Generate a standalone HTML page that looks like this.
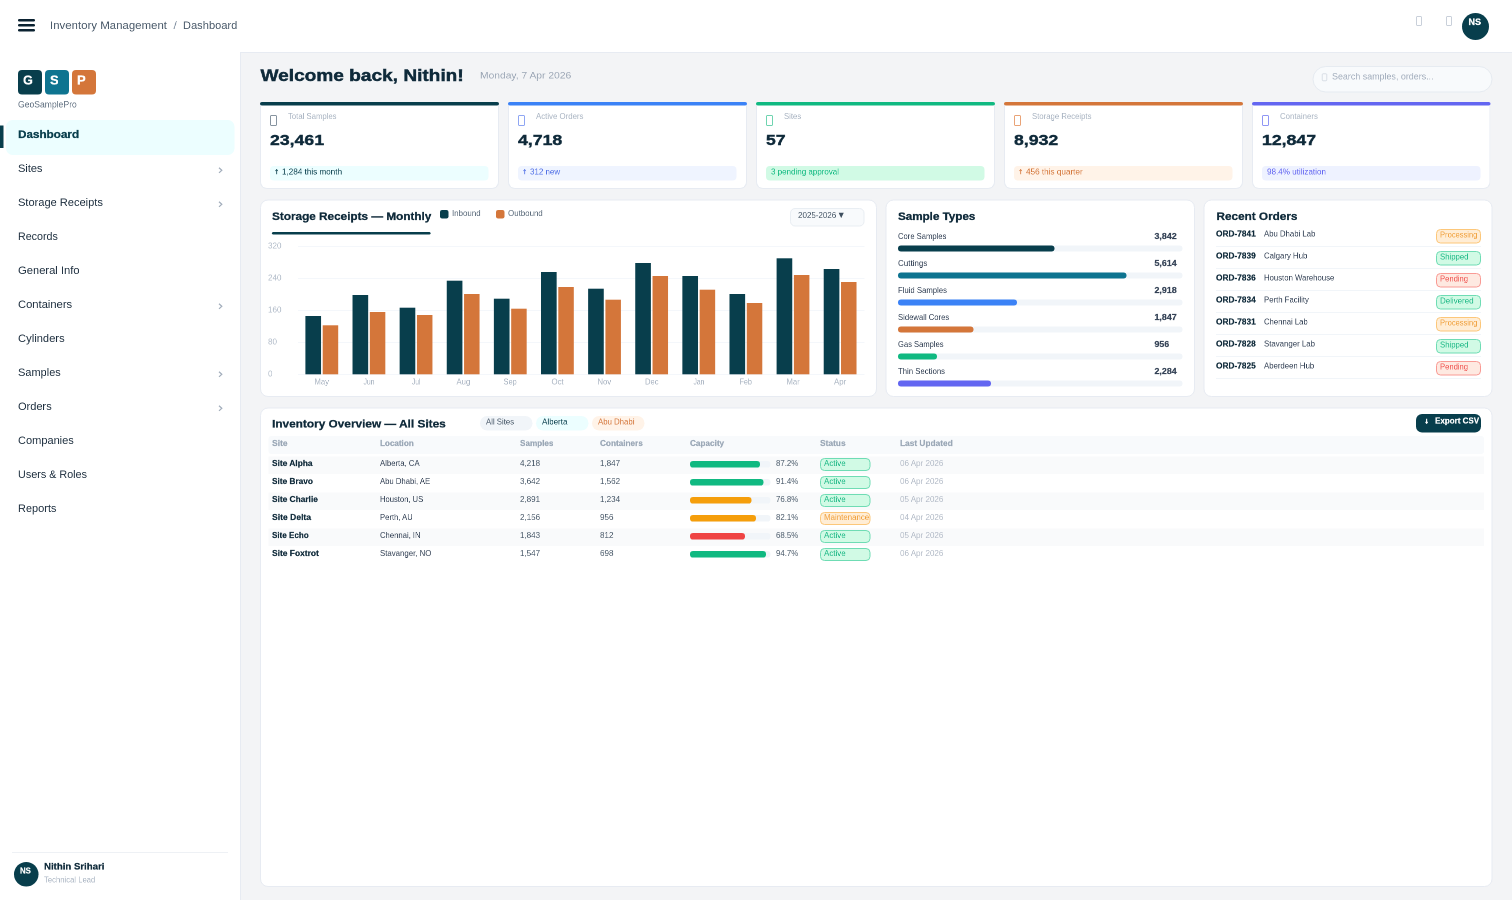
<!DOCTYPE html>
<html lang="en"><head><meta charset="utf-8"><title>GeoSamplePro — Dashboard</title><style>
html,body{margin:0;padding:0;}
body{width:1512px;height:900px;position:relative;overflow:hidden;background:#ffffff;font-family:"Liberation Sans",sans-serif;}
#app{position:absolute;left:0;top:0;width:3024px;height:1800px;transform:scale(0.5);transform-origin:0 0;}
.b{position:absolute;box-sizing:border-box;}
.t{position:absolute;white-space:pre;line-height:1;transform-origin:0 0;will-change:transform;font-family:"Liberation Sans",sans-serif;}
</style></head>
<body>
<div id="app">
<div class="b" style="left:480px;top:104px;width:2544px;height:1696px;background:#f3f4f6;border-left:2px solid #e7ebf2;border-top:2px solid #e7ebf2;"></div>
<div class="b" style="left:36px;top:38px;width:33.5px;height:5px;background:#0b2231;border-radius:2.5px;"></div>
<div class="b" style="left:36px;top:48px;width:33.5px;height:5px;background:#0b2231;border-radius:2.5px;"></div>
<div class="b" style="left:36px;top:58.2px;width:33.5px;height:5px;background:#0b2231;border-radius:2.5px;"></div>
<span class="t" style="left:100.00px;top:41.00px;font-size:21.40px;color:#4b5b6b;transform:scaleX(1.069);">Inventory Management</span>
<span class="t" style="left:346.60px;top:41.00px;font-size:21.40px;color:#8593a3;transform:scaleX(1.131);">/</span>
<span class="t" style="left:366.00px;top:41.00px;font-size:21.40px;color:#4b5b6b;transform:scaleX(1.038);">Dashboard</span>
<div class="b" style="left:2832px;top:32px;width:12px;height:20px;border-radius:2px;border:2px solid #c9d0da;"></div>
<div class="b" style="left:2892px;top:32px;width:12px;height:20px;border-radius:2px;border:2px solid #c9d0da;"></div>
<div class="b" style="left:2924px;top:26px;width:54px;height:54px;background:#083e4c;border-radius:50%;"></div>
<span class="t" style="left:2936.60px;top:36.00px;font-size:17.60px;color:#ffffff;transform:scaleX(1.019);font-weight:700;-webkit-text-stroke:0.45px #ffffff;">NS</span>
<div class="b" style="left:36px;top:140px;width:48.4px;height:48.6px;background:#083e4c;border-radius:8px;"></div>
<div class="b" style="left:90px;top:140px;width:48.4px;height:48.6px;background:#0e7490;border-radius:8px;"></div>
<div class="b" style="left:144px;top:140px;width:48.4px;height:48.6px;background:#d4763a;border-radius:8px;"></div>
<span class="t" style="left:45.60px;top:147.80px;font-size:25.20px;color:#ffffff;transform:scaleX(1.006);font-weight:700;-webkit-text-stroke:0.50px #ffffff;">G</span>
<span class="t" style="left:100.40px;top:147.80px;font-size:25.20px;color:#ffffff;transform:scaleX(1.030);font-weight:700;-webkit-text-stroke:0.50px #ffffff;">S</span>
<span class="t" style="left:154.00px;top:147.80px;font-size:25.20px;color:#ffffff;transform:scaleX(1.046);font-weight:700;-webkit-text-stroke:0.50px #ffffff;">P</span>
<span class="t" style="left:36.00px;top:201.20px;font-size:17.60px;color:#637282;transform:scaleX(0.976);">GeoSamplePro</span>
<div class="b" style="left:12px;top:240px;width:457px;height:70px;background:#ecfeff;border-radius:13px;"></div>
<div class="b" style="left:0px;top:251px;width:7px;height:45px;background:#083e4c;"></div>
<span class="t" style="left:36.00px;top:259.00px;font-size:21.40px;color:#083e4c;transform:scaleX(1.093);font-weight:700;-webkit-text-stroke:0.56px #083e4c;">Dashboard</span>
<span class="t" style="left:36.00px;top:327.00px;font-size:21.40px;color:#1e2f3f;transform:scaleX(1.028);">Sites</span>
<svg class="b" style="left:436px;top:334.2px" width="12" height="14" viewBox="0 0 6 7"><path d="M1 0.7 L3.8 3.3 L1 5.9" fill="none" stroke="#a3aebc" stroke-width="1.25"/></svg>
<span class="t" style="left:36.00px;top:395.00px;font-size:21.40px;color:#1e2f3f;transform:scaleX(1.035);">Storage Receipts</span>
<svg class="b" style="left:436px;top:402.2px" width="12" height="14" viewBox="0 0 6 7"><path d="M1 0.7 L3.8 3.3 L1 5.9" fill="none" stroke="#a3aebc" stroke-width="1.25"/></svg>
<span class="t" style="left:36.00px;top:463.00px;font-size:21.40px;color:#1e2f3f;">Records</span>
<span class="t" style="left:36.00px;top:531.00px;font-size:21.40px;color:#1e2f3f;transform:scaleX(1.046);">General Info</span>
<span class="t" style="left:36.00px;top:599.00px;font-size:21.40px;color:#1e2f3f;transform:scaleX(1.046);">Containers</span>
<svg class="b" style="left:436px;top:606.2px" width="12" height="14" viewBox="0 0 6 7"><path d="M1 0.7 L3.8 3.3 L1 5.9" fill="none" stroke="#a3aebc" stroke-width="1.25"/></svg>
<span class="t" style="left:36.00px;top:667.00px;font-size:21.40px;color:#1e2f3f;transform:scaleX(1.047);">Cylinders</span>
<span class="t" style="left:36.00px;top:735.00px;font-size:21.40px;color:#1e2f3f;transform:scaleX(1.027);">Samples</span>
<svg class="b" style="left:436px;top:742.2px" width="12" height="14" viewBox="0 0 6 7"><path d="M1 0.7 L3.8 3.3 L1 5.9" fill="none" stroke="#a3aebc" stroke-width="1.25"/></svg>
<span class="t" style="left:36.00px;top:803.00px;font-size:21.40px;color:#1e2f3f;transform:scaleX(1.030);">Orders</span>
<svg class="b" style="left:436px;top:810.2px" width="12" height="14" viewBox="0 0 6 7"><path d="M1 0.7 L3.8 3.3 L1 5.9" fill="none" stroke="#a3aebc" stroke-width="1.25"/></svg>
<span class="t" style="left:36.00px;top:871.00px;font-size:21.40px;color:#1e2f3f;transform:scaleX(1.032);">Companies</span>
<span class="t" style="left:36.00px;top:939.00px;font-size:21.40px;color:#1e2f3f;transform:scaleX(1.009);">Users &amp; Roles</span>
<span class="t" style="left:36.00px;top:1007.00px;font-size:21.40px;color:#1e2f3f;transform:scaleX(1.025);">Reports</span>
<div class="b" style="left:24px;top:1704px;width:432px;height:2px;background:#eef1f5;"></div>
<div class="b" style="left:28px;top:1724px;width:49px;height:49px;background:#083e4c;border-radius:50%;"></div>
<span class="t" style="left:40.00px;top:1734.20px;font-size:15.68px;color:#ffffff;font-weight:700;-webkit-text-stroke:0.39px #ffffff;">NS</span>
<span class="t" style="left:88.00px;top:1725.40px;font-size:17.60px;color:#0f2a3a;transform:scaleX(1.094);font-weight:700;-webkit-text-stroke:0.45px #0f2a3a;">Nithin Srihari</span>
<span class="t" style="left:88.00px;top:1751.80px;font-size:15.68px;color:#a9b4c2;transform:scaleX(0.980);">Technical Lead</span>
<span class="t" style="left:520.60px;top:135.00px;font-size:32.96px;color:#0f2a3a;transform:scaleX(1.158);font-weight:700;-webkit-text-stroke:0.90px #0f2a3a;">Welcome back, Nithin!</span>
<span class="t" style="left:960.00px;top:141.20px;font-size:19.26px;color:#9ba6b5;transform:scaleX(1.067);">Monday, 7 Apr 2026</span>
<div class="b" style="left:2625px;top:132px;width:360px;height:53px;background:#f8fafc;border-radius:26.5px;border:2px solid #e6ebf1;"></div>
<div class="b" style="left:2644px;top:147.4px;width:10.4px;height:14.8px;border-radius:2px;border:1.8px solid #bcc5d0;"></div>
<span class="t" style="left:2664.00px;top:145.40px;font-size:17.60px;color:#a3aebd;transform:scaleX(1.013);">Search samples, orders...</span>
<div class="b" style="left:520px;top:208px;width:478px;height:170px;background:#ffffff;border:2px solid #e7ebf2;border-top:none;border-radius:0 0 14px 14px;"></div>
<div class="b" style="left:520px;top:204px;width:478px;height:7px;background:#083e4c;border-radius:4px;"></div>
<div class="b" style="left:540px;top:229.5px;width:14px;height:22px;border-radius:2px;border:2.5px solid #8794a0;"></div>
<span class="t" style="left:576.00px;top:224.80px;font-size:15.68px;color:#a9b4c2;transform:scaleX(0.986);">Total Samples</span>
<span class="t" style="left:540.00px;top:266.00px;font-size:28.84px;color:#0f2a3a;transform:scaleX(1.226);font-weight:700;-webkit-text-stroke:0.78px #0f2a3a;">23,461</span>
<div class="b" style="left:540.4px;top:332px;width:436.4px;height:29.2px;background:#ecfeff;border-radius:8px;"></div>
<svg class="b" style="left:550.42px;top:338.48px" width="6.44" height="10.92" viewBox="0 0 3.22 5.46"><path d="M1.61 5.46 V0.48 M0.40 2.10 L1.61 0.48 L2.82 2.10" fill="none" stroke="#083e4c" stroke-width="0.81"/></svg>
<span class="t" style="left:564.00px;top:336.40px;font-size:15.68px;color:#083e4c;transform:scaleX(1.036);">1,284 this month</span>
<div class="b" style="left:1016px;top:208px;width:478px;height:170px;background:#ffffff;border:2px solid #e7ebf2;border-top:none;border-radius:0 0 14px 14px;"></div>
<div class="b" style="left:1016px;top:204px;width:478px;height:7px;background:#3b82f6;border-radius:4px;"></div>
<div class="b" style="left:1036px;top:229.5px;width:14px;height:22px;border-radius:2px;border:2.5px solid #8fa6f3;"></div>
<span class="t" style="left:1072.00px;top:224.80px;font-size:15.68px;color:#a9b4c2;">Active Orders</span>
<span class="t" style="left:1036.00px;top:266.00px;font-size:28.84px;color:#0f2a3a;transform:scaleX(1.228);font-weight:700;-webkit-text-stroke:0.78px #0f2a3a;">4,718</span>
<div class="b" style="left:1036.4px;top:332px;width:436.4px;height:29.2px;background:#eff4ff;border-radius:8px;"></div>
<svg class="b" style="left:1046.42px;top:338.48px" width="6.44" height="10.92" viewBox="0 0 3.22 5.46"><path d="M1.61 5.46 V0.48 M0.40 2.10 L1.61 0.48 L2.82 2.10" fill="none" stroke="#4f6fe6" stroke-width="0.81"/></svg>
<span class="t" style="left:1060.00px;top:336.40px;font-size:15.68px;color:#4f6fe6;transform:scaleX(1.015);">312 new</span>
<div class="b" style="left:1512px;top:208px;width:478px;height:170px;background:#ffffff;border:2px solid #e7ebf2;border-top:none;border-radius:0 0 14px 14px;"></div>
<div class="b" style="left:1512px;top:204px;width:478px;height:7px;background:#10b981;border-radius:4px;"></div>
<div class="b" style="left:1532px;top:229.5px;width:14px;height:22px;border-radius:2px;border:2.5px solid #6fd4b0;"></div>
<span class="t" style="left:1568.00px;top:224.80px;font-size:15.68px;color:#a9b4c2;transform:scaleX(0.982);">Sites</span>
<span class="t" style="left:1532.00px;top:266.00px;font-size:28.84px;color:#0f2a3a;transform:scaleX(1.215);font-weight:700;-webkit-text-stroke:0.78px #0f2a3a;">57</span>
<div class="b" style="left:1532.4px;top:332px;width:436.4px;height:29.2px;background:#d1fae5;border-radius:8px;"></div>
<span class="t" style="left:1542.00px;top:336.40px;font-size:15.68px;color:#10b981;transform:scaleX(1.020);">3 pending approval</span>
<div class="b" style="left:2008px;top:208px;width:478px;height:170px;background:#ffffff;border:2px solid #e7ebf2;border-top:none;border-radius:0 0 14px 14px;"></div>
<div class="b" style="left:2008px;top:204px;width:478px;height:7px;background:#d4763a;border-radius:4px;"></div>
<div class="b" style="left:2028px;top:229.5px;width:14px;height:22px;border-radius:2px;border:2.5px solid #e9a377;"></div>
<span class="t" style="left:2064.00px;top:224.80px;font-size:15.68px;color:#a9b4c2;transform:scaleX(0.989);">Storage Receipts</span>
<span class="t" style="left:2028.00px;top:266.00px;font-size:28.84px;color:#0f2a3a;transform:scaleX(1.228);font-weight:700;-webkit-text-stroke:0.78px #0f2a3a;">8,932</span>
<div class="b" style="left:2028.4px;top:332px;width:436.4px;height:29.2px;background:#fff3e8;border-radius:8px;"></div>
<svg class="b" style="left:2038.42px;top:338.48px" width="6.44" height="10.92" viewBox="0 0 3.22 5.46"><path d="M1.61 5.46 V0.48 M0.40 2.10 L1.61 0.48 L2.82 2.10" fill="none" stroke="#d4763a" stroke-width="0.81"/></svg>
<span class="t" style="left:2052.00px;top:336.40px;font-size:15.68px;color:#d4763a;transform:scaleX(1.040);">456 this quarter</span>
<div class="b" style="left:2504px;top:208px;width:477px;height:170px;background:#ffffff;border:2px solid #e7ebf2;border-top:none;border-radius:0 0 14px 14px;"></div>
<div class="b" style="left:2504px;top:204px;width:477px;height:7px;background:#6366f1;border-radius:4px;"></div>
<div class="b" style="left:2524px;top:229.5px;width:14px;height:22px;border-radius:2px;border:2.5px solid #8f96f5;"></div>
<span class="t" style="left:2560.00px;top:224.80px;font-size:15.68px;color:#a9b4c2;">Containers</span>
<span class="t" style="left:2524.00px;top:266.00px;font-size:28.84px;color:#0f2a3a;transform:scaleX(1.226);font-weight:700;-webkit-text-stroke:0.78px #0f2a3a;">12,847</span>
<div class="b" style="left:2524.4px;top:332px;width:436.4px;height:29.2px;background:#eef2ff;border-radius:8px;"></div>
<span class="t" style="left:2534.00px;top:336.40px;font-size:15.68px;color:#6366f1;transform:scaleX(1.032);">98.4% utilization</span>
<div class="b" style="left:520px;top:399px;width:1234px;height:395px;background:#ffffff;border-radius:16px;border:2px solid #e7ebf2;"></div>
<span class="t" style="left:544.40px;top:423.00px;font-size:21.40px;color:#0f2a3a;transform:scaleX(1.099);font-weight:700;-webkit-text-stroke:0.56px #0f2a3a;">Storage Receipts — Monthly</span>
<div class="b" style="left:544px;top:464.4px;width:316.6px;height:4.8px;background:#083e4c;border-radius:2.4px;"></div>
<div class="b" style="left:880px;top:420px;width:16.8px;height:16.8px;background:#083e4c;border-radius:4px;"></div>
<span class="t" style="left:904.00px;top:419.00px;font-size:15.68px;color:#5b6b7b;transform:scaleX(1.009);">Inbound</span>
<div class="b" style="left:992px;top:420px;width:16.8px;height:16.8px;background:#d4763a;border-radius:4px;"></div>
<span class="t" style="left:1016.00px;top:419.00px;font-size:15.68px;color:#5b6b7b;transform:scaleX(1.010);">Outbound</span>
<div class="b" style="left:1580px;top:416px;width:149.4px;height:36.6px;background:#f8fafc;border-radius:10px;border:2px solid #e9eef3;"></div>
<span class="t" style="left:1596.00px;top:423.00px;font-size:15.68px;color:#4b5b6b;transform:scaleX(1.019);">2025-2026</span>
<svg class="b" style="left:1677.4px;top:424.8px" width="10.8" height="11.2" viewBox="0 0 5.4 5.6"><path d="M0 0 H5.4 L2.7 5.6 Z" fill="#3f4f5f"/></svg>
<div class="b" style="left:596px;top:492px;width:1133.4px;height:2px;background:#f4f7fb;"></div>
<span class="t" style="left:536.00px;top:484.20px;font-size:15.68px;color:#b3bdca;transform:scaleX(1.024);">320</span>
<div class="b" style="left:596px;top:556px;width:1133.4px;height:2px;background:#f4f7fb;"></div>
<span class="t" style="left:536.00px;top:548.20px;font-size:15.68px;color:#b3bdca;transform:scaleX(1.024);">240</span>
<div class="b" style="left:596px;top:620px;width:1133.4px;height:2px;background:#f4f7fb;"></div>
<span class="t" style="left:536.00px;top:612.20px;font-size:15.68px;color:#b3bdca;transform:scaleX(1.024);">160</span>
<div class="b" style="left:596px;top:684px;width:1133.4px;height:2px;background:#f4f7fb;"></div>
<span class="t" style="left:536.00px;top:676.20px;font-size:15.68px;color:#b3bdca;transform:scaleX(1.023);">80</span>
<div class="b" style="left:596px;top:748px;width:1133.4px;height:2px;background:#f4f7fb;"></div>
<span class="t" style="left:536.00px;top:740.20px;font-size:15.68px;color:#b3bdca;transform:scaleX(1.025);">0</span>
<span class="t" style="left:629.12px;top:756.40px;font-size:15.68px;color:#a8b3c1;transform:scaleX(0.979);">May</span>
<span class="t" style="left:726.86px;top:756.40px;font-size:15.68px;color:#a8b3c1;transform:scaleX(0.866);">Jun</span>
<span class="t" style="left:823.55px;top:756.40px;font-size:15.68px;color:#a8b3c1;transform:scaleX(0.844);">Jul</span>
<span class="t" style="left:912.73px;top:756.40px;font-size:15.68px;color:#a8b3c1;transform:scaleX(0.981);">Aug</span>
<span class="t" style="left:1007.40px;top:756.40px;font-size:15.68px;color:#a8b3c1;transform:scaleX(0.947);">Sep</span>
<span class="t" style="left:1102.69px;top:756.40px;font-size:15.68px;color:#a8b3c1;transform:scaleX(0.994);">Oct</span>
<span class="t" style="left:1195.33px;top:756.40px;font-size:15.68px;color:#a8b3c1;transform:scaleX(0.982);">Nov</span>
<span class="t" style="left:1289.65px;top:756.40px;font-size:15.68px;color:#a8b3c1;transform:scaleX(0.973);">Dec</span>
<span class="t" style="left:1386.80px;top:756.40px;font-size:15.68px;color:#a8b3c1;transform:scaleX(0.855);">Jan</span>
<span class="t" style="left:1479.39px;top:756.40px;font-size:15.68px;color:#a8b3c1;transform:scaleX(0.919);">Feb</span>
<span class="t" style="left:1572.78px;top:756.40px;font-size:15.68px;color:#a8b3c1;transform:scaleX(0.980);">Mar</span>
<span class="t" style="left:1668.08px;top:756.40px;font-size:15.68px;color:#a8b3c1;transform:scaleX(0.995);">Apr</span>
<svg class="b" style="left:520px;top:400px" width="1232" height="392" viewBox="260 200 616 196"><rect x="305.40" y="316" width="15.65" height="58.3" fill="#083e4c"/><rect x="322.70" y="325.3" width="15.5" height="49.0" fill="#d4763a"/><rect x="352.52" y="295" width="15.65" height="79.3" fill="#083e4c"/><rect x="369.82" y="312" width="15.5" height="62.3" fill="#d4763a"/><rect x="399.64" y="307.7" width="15.65" height="66.6" fill="#083e4c"/><rect x="416.94" y="315" width="15.5" height="59.3" fill="#d4763a"/><rect x="446.76" y="280.7" width="15.65" height="93.6" fill="#083e4c"/><rect x="464.06" y="294" width="15.5" height="80.3" fill="#d4763a"/><rect x="493.88" y="298.7" width="15.65" height="75.6" fill="#083e4c"/><rect x="511.18" y="308.7" width="15.5" height="65.6" fill="#d4763a"/><rect x="541.00" y="272" width="15.65" height="102.3" fill="#083e4c"/><rect x="558.30" y="287" width="15.5" height="87.3" fill="#d4763a"/><rect x="588.12" y="288.7" width="15.65" height="85.6" fill="#083e4c"/><rect x="605.42" y="299.7" width="15.5" height="74.6" fill="#d4763a"/><rect x="635.24" y="263" width="15.65" height="111.3" fill="#083e4c"/><rect x="652.54" y="276" width="15.5" height="98.3" fill="#d4763a"/><rect x="682.36" y="276" width="15.65" height="98.3" fill="#083e4c"/><rect x="699.66" y="289.7" width="15.5" height="84.6" fill="#d4763a"/><rect x="729.48" y="294" width="15.65" height="80.3" fill="#083e4c"/><rect x="746.78" y="303" width="15.5" height="71.3" fill="#d4763a"/><rect x="776.60" y="258.3" width="15.65" height="116.0" fill="#083e4c"/><rect x="793.90" y="275" width="15.5" height="99.3" fill="#d4763a"/><rect x="823.72" y="269" width="15.65" height="105.3" fill="#083e4c"/><rect x="841.02" y="282" width="15.5" height="92.3" fill="#d4763a"/></svg>
<div class="b" style="left:1771px;top:399px;width:619px;height:395px;background:#ffffff;border-radius:16px;border:2px solid #e7ebf2;"></div>
<span class="t" style="left:1796.00px;top:423.00px;font-size:21.40px;color:#0f2a3a;transform:scaleX(1.087);font-weight:700;-webkit-text-stroke:0.56px #0f2a3a;">Sample Types</span>
<span class="t" style="left:1796.00px;top:465.00px;font-size:15.68px;color:#334155;transform:scaleX(0.974);">Core Samples</span>
<span class="t" style="left:2308.60px;top:465.00px;font-size:15.68px;color:#334155;transform:scaleX(1.131);font-weight:700;-webkit-text-stroke:0.39px #334155;">3,842</span>
<div class="b" style="left:1796px;top:490.6px;width:569.2px;height:12.4px;background:#f1f5f9;border-radius:6.2px;"></div>
<div class="b" style="left:1796px;top:490.6px;width:312.6px;height:12.4px;background:#083e4c;border-radius:6.2px;"></div>
<span class="t" style="left:1796.00px;top:519.00px;font-size:15.68px;color:#334155;transform:scaleX(1.020);">Cuttings</span>
<span class="t" style="left:2308.60px;top:519.00px;font-size:15.68px;color:#334155;transform:scaleX(1.131);font-weight:700;-webkit-text-stroke:0.39px #334155;">5,614</span>
<div class="b" style="left:1796px;top:544.6px;width:569.2px;height:12.4px;background:#f1f5f9;border-radius:6.2px;"></div>
<div class="b" style="left:1796px;top:544.6px;width:456.6px;height:12.4px;background:#0e7490;border-radius:6.2px;"></div>
<span class="t" style="left:1796.00px;top:573.00px;font-size:15.68px;color:#334155;transform:scaleX(0.986);">Fluid Samples</span>
<span class="t" style="left:2308.60px;top:573.00px;font-size:15.68px;color:#334155;transform:scaleX(1.131);font-weight:700;-webkit-text-stroke:0.39px #334155;">2,918</span>
<div class="b" style="left:1796px;top:598.6px;width:569.2px;height:12.4px;background:#f1f5f9;border-radius:6.2px;"></div>
<div class="b" style="left:1796px;top:598.6px;width:238px;height:12.4px;background:#3b82f6;border-radius:6.2px;"></div>
<span class="t" style="left:1796.00px;top:627.00px;font-size:15.68px;color:#334155;transform:scaleX(0.979);">Sidewall Cores</span>
<span class="t" style="left:2308.60px;top:627.00px;font-size:15.68px;color:#334155;transform:scaleX(1.131);font-weight:700;-webkit-text-stroke:0.39px #334155;">1,847</span>
<div class="b" style="left:1796px;top:652.6px;width:569.2px;height:12.4px;background:#f1f5f9;border-radius:6.2px;"></div>
<div class="b" style="left:1796px;top:652.6px;width:150.6px;height:12.4px;background:#d4763a;border-radius:6.2px;"></div>
<span class="t" style="left:1796.00px;top:681.00px;font-size:15.68px;color:#334155;transform:scaleX(0.968);">Gas Samples</span>
<span class="t" style="left:2308.60px;top:681.00px;font-size:15.68px;color:#334155;transform:scaleX(1.120);font-weight:700;-webkit-text-stroke:0.39px #334155;">956</span>
<div class="b" style="left:1796px;top:706.6px;width:569.2px;height:12.4px;background:#f1f5f9;border-radius:6.2px;"></div>
<div class="b" style="left:1796px;top:706.6px;width:78px;height:12.4px;background:#10b981;border-radius:6.2px;"></div>
<span class="t" style="left:1796.00px;top:735.00px;font-size:15.68px;color:#334155;transform:scaleX(0.990);">Thin Sections</span>
<span class="t" style="left:2308.60px;top:735.00px;font-size:15.68px;color:#334155;transform:scaleX(1.131);font-weight:700;-webkit-text-stroke:0.39px #334155;">2,284</span>
<div class="b" style="left:1796px;top:760.6px;width:569.2px;height:12.4px;background:#f1f5f9;border-radius:6.2px;"></div>
<div class="b" style="left:1796px;top:760.6px;width:186px;height:12.4px;background:#6366f1;border-radius:6.2px;"></div>
<div class="b" style="left:2407px;top:399px;width:578px;height:395px;background:#ffffff;border-radius:16px;border:2px solid #e7ebf2;"></div>
<span class="t" style="left:2432.60px;top:423.00px;font-size:21.40px;color:#0f2a3a;transform:scaleX(1.098);font-weight:700;-webkit-text-stroke:0.56px #0f2a3a;">Recent Orders</span>
<span class="t" style="left:2432.40px;top:460.20px;font-size:15.68px;color:#0f2a3a;transform:scaleX(1.060);font-weight:700;-webkit-text-stroke:0.39px #0f2a3a;">ORD-7841</span>
<span class="t" style="left:2528.00px;top:460.20px;font-size:15.68px;color:#334155;transform:scaleX(0.990);">Abu Dhabi Lab</span>
<div class="b" style="left:2872px;top:458px;width:90px;height:29.4px;background:#ffedd5;border-radius:9px;border:2px solid #fcc77a;"></div>
<span class="t" style="left:2880.00px;top:461.80px;font-size:15.68px;color:#f0a03c;transform:scaleX(0.965);">Processing</span>
<div class="b" style="left:2432px;top:492.4px;width:530px;height:2px;background:#f1f5f9;"></div>
<span class="t" style="left:2432.40px;top:504.20px;font-size:15.68px;color:#0f2a3a;transform:scaleX(1.060);font-weight:700;-webkit-text-stroke:0.39px #0f2a3a;">ORD-7839</span>
<span class="t" style="left:2528.00px;top:504.20px;font-size:15.68px;color:#334155;transform:scaleX(0.994);">Calgary Hub</span>
<div class="b" style="left:2872px;top:502px;width:90px;height:29.4px;background:#d1fae5;border-radius:9px;border:2px solid #6fdcb4;"></div>
<span class="t" style="left:2880.00px;top:505.80px;font-size:15.68px;color:#1fb987;transform:scaleX(0.991);">Shipped</span>
<div class="b" style="left:2432px;top:536.4px;width:530px;height:2px;background:#f1f5f9;"></div>
<span class="t" style="left:2432.40px;top:548.20px;font-size:15.68px;color:#0f2a3a;transform:scaleX(1.060);font-weight:700;-webkit-text-stroke:0.39px #0f2a3a;">ORD-7836</span>
<span class="t" style="left:2528.00px;top:548.20px;font-size:15.68px;color:#334155;transform:scaleX(0.988);">Houston Warehouse</span>
<div class="b" style="left:2872px;top:546px;width:90px;height:29.4px;background:#fee9e1;border-radius:9px;border:2px solid #f99a94;"></div>
<span class="t" style="left:2880.00px;top:549.80px;font-size:15.68px;color:#ef5350;transform:scaleX(0.974);">Pending</span>
<div class="b" style="left:2432px;top:580.4px;width:530px;height:2px;background:#f1f5f9;"></div>
<span class="t" style="left:2432.40px;top:592.20px;font-size:15.68px;color:#0f2a3a;transform:scaleX(1.060);font-weight:700;-webkit-text-stroke:0.39px #0f2a3a;">ORD-7834</span>
<span class="t" style="left:2528.00px;top:592.20px;font-size:15.68px;color:#334155;transform:scaleX(0.990);">Perth Facility</span>
<div class="b" style="left:2872px;top:590px;width:90px;height:29.4px;background:#d1fae5;border-radius:9px;border:2px solid #6fdcb4;"></div>
<span class="t" style="left:2880.00px;top:593.80px;font-size:15.68px;color:#1fb987;transform:scaleX(1.013);">Delivered</span>
<div class="b" style="left:2432px;top:624.4px;width:530px;height:2px;background:#f1f5f9;"></div>
<span class="t" style="left:2432.40px;top:636.20px;font-size:15.68px;color:#0f2a3a;transform:scaleX(1.060);font-weight:700;-webkit-text-stroke:0.39px #0f2a3a;">ORD-7831</span>
<span class="t" style="left:2528.00px;top:636.20px;font-size:15.68px;color:#334155;transform:scaleX(0.982);">Chennai Lab</span>
<div class="b" style="left:2872px;top:634px;width:90px;height:29.4px;background:#ffedd5;border-radius:9px;border:2px solid #fcc77a;"></div>
<span class="t" style="left:2880.00px;top:637.80px;font-size:15.68px;color:#f0a03c;transform:scaleX(0.965);">Processing</span>
<div class="b" style="left:2432px;top:668.4px;width:530px;height:2px;background:#f1f5f9;"></div>
<span class="t" style="left:2432.40px;top:680.20px;font-size:15.68px;color:#0f2a3a;transform:scaleX(1.060);font-weight:700;-webkit-text-stroke:0.39px #0f2a3a;">ORD-7828</span>
<span class="t" style="left:2528.00px;top:680.20px;font-size:15.68px;color:#334155;">Stavanger Lab</span>
<div class="b" style="left:2872px;top:678px;width:90px;height:29.4px;background:#d1fae5;border-radius:9px;border:2px solid #6fdcb4;"></div>
<span class="t" style="left:2880.00px;top:681.80px;font-size:15.68px;color:#1fb987;transform:scaleX(0.991);">Shipped</span>
<div class="b" style="left:2432px;top:712.4px;width:530px;height:2px;background:#f1f5f9;"></div>
<span class="t" style="left:2432.40px;top:724.20px;font-size:15.68px;color:#0f2a3a;transform:scaleX(1.060);font-weight:700;-webkit-text-stroke:0.39px #0f2a3a;">ORD-7825</span>
<span class="t" style="left:2528.00px;top:724.20px;font-size:15.68px;color:#334155;transform:scaleX(0.993);">Aberdeen Hub</span>
<div class="b" style="left:2872px;top:722px;width:90px;height:29.4px;background:#fee9e1;border-radius:9px;border:2px solid #f99a94;"></div>
<span class="t" style="left:2880.00px;top:725.80px;font-size:15.68px;color:#ef5350;transform:scaleX(0.974);">Pending</span>
<div class="b" style="left:2432px;top:756.4px;width:530px;height:2px;background:#f1f5f9;"></div>
<div class="b" style="left:520px;top:815px;width:2465px;height:959px;background:#ffffff;border-radius:16px;border:2px solid #e7ebf2;"></div>
<span class="t" style="left:544.40px;top:838.40px;font-size:21.40px;color:#0f2a3a;transform:scaleX(1.106);font-weight:700;-webkit-text-stroke:0.56px #0f2a3a;">Inventory Overview — All Sites</span>
<div class="b" style="left:960px;top:832px;width:104.6px;height:28.6px;background:#f1f5f9;border-radius:14.4px;"></div>
<span class="t" style="left:972.00px;top:836.40px;font-size:15.68px;color:#4b5b6b;transform:scaleX(0.990);">All Sites</span>
<div class="b" style="left:1072px;top:832px;width:104.6px;height:28.6px;background:#ecfeff;border-radius:14.4px;"></div>
<span class="t" style="left:1084.00px;top:836.40px;font-size:15.68px;color:#083e4c;transform:scaleX(1.024);">Alberta</span>
<div class="b" style="left:1184px;top:832px;width:104.6px;height:28.6px;background:#fff3e8;border-radius:14.4px;"></div>
<span class="t" style="left:1196.00px;top:836.40px;font-size:15.68px;color:#d4763a;transform:scaleX(0.996);">Abu Dhabi</span>
<div class="b" style="left:2832px;top:828px;width:130px;height:37.2px;background:#083e4c;border-radius:12px;"></div>
<svg class="b" style="left:2850.42px;top:836.68px" width="6.44" height="10.92" viewBox="0 0 3.22 5.46"><path d="M1.61 0 V4.79 M0.56 3.36 L1.61 4.79 L2.66 3.36" fill="none" stroke="#ffffff" stroke-width="1.12"/></svg>
<span class="t" style="left:2869.60px;top:834.20px;font-size:15.68px;color:#ffffff;transform:scaleX(1.024);font-weight:700;-webkit-text-stroke:0.39px #ffffff;">Export CSV</span>
<div class="b" style="left:536.6px;top:872px;width:2431.4px;height:36px;background:#f8fafc;border-radius:6px;"></div>
<span class="t" style="left:544.00px;top:879.00px;font-size:15.68px;color:#9aa7b6;transform:scaleX(1.083);font-weight:700;-webkit-text-stroke:0.39px #9aa7b6;">Site</span>
<span class="t" style="left:760.00px;top:879.00px;font-size:15.68px;color:#9aa7b6;transform:scaleX(1.033);font-weight:700;-webkit-text-stroke:0.39px #9aa7b6;">Location</span>
<span class="t" style="left:1040.00px;top:879.00px;font-size:15.68px;color:#9aa7b6;transform:scaleX(1.037);font-weight:700;-webkit-text-stroke:0.39px #9aa7b6;">Samples</span>
<span class="t" style="left:1200.00px;top:879.00px;font-size:15.68px;color:#9aa7b6;transform:scaleX(1.045);font-weight:700;-webkit-text-stroke:0.39px #9aa7b6;">Containers</span>
<span class="t" style="left:1380.00px;top:879.00px;font-size:15.68px;color:#9aa7b6;transform:scaleX(1.044);font-weight:700;-webkit-text-stroke:0.39px #9aa7b6;">Capacity</span>
<span class="t" style="left:1640.00px;top:879.00px;font-size:15.68px;color:#9aa7b6;transform:scaleX(1.070);font-weight:700;-webkit-text-stroke:0.39px #9aa7b6;">Status</span>
<span class="t" style="left:1800.00px;top:879.00px;font-size:15.68px;color:#9aa7b6;transform:scaleX(1.062);font-weight:700;-webkit-text-stroke:0.39px #9aa7b6;">Last Updated</span>
<div class="b" style="left:536.6px;top:913px;width:2431.4px;height:35px;background:#f9fafb;"></div>
<span class="t" style="left:544.00px;top:919.00px;font-size:15.68px;color:#0f2a3a;transform:scaleX(1.066);font-weight:700;-webkit-text-stroke:0.39px #0f2a3a;">Site Alpha</span>
<span class="t" style="left:760.00px;top:919.00px;font-size:15.68px;color:#334155;transform:scaleX(0.988);">Alberta, CA</span>
<span class="t" style="left:1040.00px;top:919.00px;font-size:15.68px;color:#4b5b6b;transform:scaleX(1.023);">4,218</span>
<span class="t" style="left:1200.00px;top:919.00px;font-size:15.68px;color:#4b5b6b;transform:scaleX(1.023);">1,847</span>
<div class="b" style="left:1380px;top:922.4px;width:160.6px;height:12.4px;background:#f1f5f9;border-radius:6.2px;"></div>
<div class="b" style="left:1380px;top:922.4px;width:140px;height:12.4px;background:#10b981;border-radius:6.2px;"></div>
<span class="t" style="left:1552.00px;top:919.00px;font-size:15.68px;color:#4b5b6b;">87.2%</span>
<div class="b" style="left:1640px;top:916px;width:101.4px;height:25.6px;background:#d1fae5;border-radius:9px;border:2px solid #6fdcb4;"></div>
<span class="t" style="left:1648.00px;top:919.00px;font-size:15.68px;color:#1fb987;transform:scaleX(1.015);">Active</span>
<span class="t" style="left:1800.00px;top:919.00px;font-size:15.68px;color:#b4bcc8;transform:scaleX(1.025);">06 Apr 2026</span>
<span class="t" style="left:544.00px;top:955.00px;font-size:15.68px;color:#0f2a3a;transform:scaleX(1.055);font-weight:700;-webkit-text-stroke:0.39px #0f2a3a;">Site Bravo</span>
<span class="t" style="left:760.00px;top:955.00px;font-size:15.68px;color:#334155;transform:scaleX(0.983);">Abu Dhabi, AE</span>
<span class="t" style="left:1040.00px;top:955.00px;font-size:15.68px;color:#4b5b6b;transform:scaleX(1.023);">3,642</span>
<span class="t" style="left:1200.00px;top:955.00px;font-size:15.68px;color:#4b5b6b;transform:scaleX(1.023);">1,562</span>
<div class="b" style="left:1380px;top:958.4px;width:160.6px;height:12.4px;background:#f1f5f9;border-radius:6.2px;"></div>
<div class="b" style="left:1380px;top:958.4px;width:146.8px;height:12.4px;background:#10b981;border-radius:6.2px;"></div>
<span class="t" style="left:1552.00px;top:955.00px;font-size:15.68px;color:#4b5b6b;">91.4%</span>
<div class="b" style="left:1640px;top:952px;width:101.4px;height:25.6px;background:#d1fae5;border-radius:9px;border:2px solid #6fdcb4;"></div>
<span class="t" style="left:1648.00px;top:955.00px;font-size:15.68px;color:#1fb987;transform:scaleX(1.015);">Active</span>
<span class="t" style="left:1800.00px;top:955.00px;font-size:15.68px;color:#b4bcc8;transform:scaleX(1.025);">06 Apr 2026</span>
<div class="b" style="left:536.6px;top:985px;width:2431.4px;height:35px;background:#f9fafb;"></div>
<span class="t" style="left:544.00px;top:991.00px;font-size:15.68px;color:#0f2a3a;transform:scaleX(1.064);font-weight:700;-webkit-text-stroke:0.39px #0f2a3a;">Site Charlie</span>
<span class="t" style="left:760.00px;top:991.00px;font-size:15.68px;color:#334155;transform:scaleX(0.971);">Houston, US</span>
<span class="t" style="left:1040.00px;top:991.00px;font-size:15.68px;color:#4b5b6b;transform:scaleX(1.023);">2,891</span>
<span class="t" style="left:1200.00px;top:991.00px;font-size:15.68px;color:#4b5b6b;transform:scaleX(1.023);">1,234</span>
<div class="b" style="left:1380px;top:994.4px;width:160.6px;height:12.4px;background:#f1f5f9;border-radius:6.2px;"></div>
<div class="b" style="left:1380px;top:994.4px;width:123.4px;height:12.4px;background:#f59e0b;border-radius:6.2px;"></div>
<span class="t" style="left:1552.00px;top:991.00px;font-size:15.68px;color:#4b5b6b;">76.8%</span>
<div class="b" style="left:1640px;top:988px;width:101.4px;height:25.6px;background:#d1fae5;border-radius:9px;border:2px solid #6fdcb4;"></div>
<span class="t" style="left:1648.00px;top:991.00px;font-size:15.68px;color:#1fb987;transform:scaleX(1.015);">Active</span>
<span class="t" style="left:1800.00px;top:991.00px;font-size:15.68px;color:#b4bcc8;transform:scaleX(1.025);">05 Apr 2026</span>
<span class="t" style="left:544.00px;top:1027.00px;font-size:15.68px;color:#0f2a3a;transform:scaleX(1.093);font-weight:700;-webkit-text-stroke:0.39px #0f2a3a;">Site Delta</span>
<span class="t" style="left:760.00px;top:1027.00px;font-size:15.68px;color:#334155;transform:scaleX(0.976);">Perth, AU</span>
<span class="t" style="left:1040.00px;top:1027.00px;font-size:15.68px;color:#4b5b6b;transform:scaleX(1.023);">2,156</span>
<span class="t" style="left:1200.00px;top:1027.00px;font-size:15.68px;color:#4b5b6b;transform:scaleX(1.024);">956</span>
<div class="b" style="left:1380px;top:1030.4px;width:160.6px;height:12.4px;background:#f1f5f9;border-radius:6.2px;"></div>
<div class="b" style="left:1380px;top:1030.4px;width:131.8px;height:12.4px;background:#f59e0b;border-radius:6.2px;"></div>
<span class="t" style="left:1552.00px;top:1027.00px;font-size:15.68px;color:#4b5b6b;">82.1%</span>
<div class="b" style="left:1640px;top:1024px;width:101.4px;height:25.6px;background:#ffedd5;border-radius:9px;border:2px solid #fcc77a;"></div>
<span class="t" style="left:1648.00px;top:1027.00px;font-size:15.68px;color:#f0a03c;transform:scaleX(1.006);">Maintenance</span>
<span class="t" style="left:1800.00px;top:1027.00px;font-size:15.68px;color:#b4bcc8;transform:scaleX(1.025);">04 Apr 2026</span>
<div class="b" style="left:536.6px;top:1057px;width:2431.4px;height:35px;background:#f9fafb;"></div>
<span class="t" style="left:544.00px;top:1063.00px;font-size:15.68px;color:#0f2a3a;transform:scaleX(1.029);font-weight:700;-webkit-text-stroke:0.39px #0f2a3a;">Site Echo</span>
<span class="t" style="left:760.00px;top:1063.00px;font-size:15.68px;color:#334155;transform:scaleX(0.980);">Chennai, IN</span>
<span class="t" style="left:1040.00px;top:1063.00px;font-size:15.68px;color:#4b5b6b;transform:scaleX(1.023);">1,843</span>
<span class="t" style="left:1200.00px;top:1063.00px;font-size:15.68px;color:#4b5b6b;transform:scaleX(1.024);">812</span>
<div class="b" style="left:1380px;top:1066.4px;width:160.6px;height:12.4px;background:#f1f5f9;border-radius:6.2px;"></div>
<div class="b" style="left:1380px;top:1066.4px;width:110px;height:12.4px;background:#ef4444;border-radius:6.2px;"></div>
<span class="t" style="left:1552.00px;top:1063.00px;font-size:15.68px;color:#4b5b6b;">68.5%</span>
<div class="b" style="left:1640px;top:1060px;width:101.4px;height:25.6px;background:#d1fae5;border-radius:9px;border:2px solid #6fdcb4;"></div>
<span class="t" style="left:1648.00px;top:1063.00px;font-size:15.68px;color:#1fb987;transform:scaleX(1.015);">Active</span>
<span class="t" style="left:1800.00px;top:1063.00px;font-size:15.68px;color:#b4bcc8;transform:scaleX(1.025);">05 Apr 2026</span>
<span class="t" style="left:544.00px;top:1099.00px;font-size:15.68px;color:#0f2a3a;transform:scaleX(1.075);font-weight:700;-webkit-text-stroke:0.39px #0f2a3a;">Site Foxtrot</span>
<span class="t" style="left:760.00px;top:1099.00px;font-size:15.68px;color:#334155;">Stavanger, NO</span>
<span class="t" style="left:1040.00px;top:1099.00px;font-size:15.68px;color:#4b5b6b;transform:scaleX(1.023);">1,547</span>
<span class="t" style="left:1200.00px;top:1099.00px;font-size:15.68px;color:#4b5b6b;transform:scaleX(1.024);">698</span>
<div class="b" style="left:1380px;top:1102.4px;width:160.6px;height:12.4px;background:#f1f5f9;border-radius:6.2px;"></div>
<div class="b" style="left:1380px;top:1102.4px;width:152px;height:12.4px;background:#10b981;border-radius:6.2px;"></div>
<span class="t" style="left:1552.00px;top:1099.00px;font-size:15.68px;color:#4b5b6b;">94.7%</span>
<div class="b" style="left:1640px;top:1096px;width:101.4px;height:25.6px;background:#d1fae5;border-radius:9px;border:2px solid #6fdcb4;"></div>
<span class="t" style="left:1648.00px;top:1099.00px;font-size:15.68px;color:#1fb987;transform:scaleX(1.015);">Active</span>
<span class="t" style="left:1800.00px;top:1099.00px;font-size:15.68px;color:#b4bcc8;transform:scaleX(1.025);">06 Apr 2026</span>
</div>
</body></html>
